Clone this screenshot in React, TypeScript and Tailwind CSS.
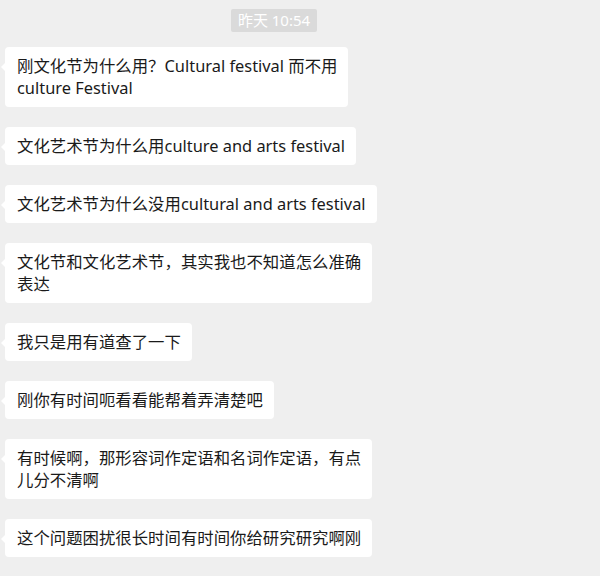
const messages: string[][] = [
  ["刚文化节为什么用？Cultural festival 而不用", "culture Festival"],
  ["文化艺术节为什么用culture and arts festival"],
  ["文化艺术节为什么没用cultural and arts festival"],
  ["文化节和文化艺术节，其实我也不知道怎么准确", "表达"],
  ["我只是用有道查了一下"],
  ["刚你有时间呃看看能帮着弄清楚吧"],
  ["有时候啊，那形容词作定语和名词作定语，有点", "儿分不清啊"],
  ["这个问题困扰很长时间有时间你给研究研究啊刚"],
];

function Bubble({ lines }: { lines: string[] }) {
  return (
    <div className="relative self-start whitespace-nowrap rounded-[4px] bg-white pl-3 pr-[11px] py-2 text-[16.4px] leading-[22px] text-[#1a1a1a]">
      {/* small tail on the left */}
      <span className="absolute -left-[4px] top-[16px] h-0 w-0 border-y-[4px] border-r-[4px] border-y-transparent border-r-white" />
      {lines.map((l) => (
        <div key={l}>{l}</div>
      ))}
    </div>
  );
}

export default function App() {
  return (
    <main
      className="flex h-[576px] w-[600px] flex-col overflow-hidden bg-[#efefef] pl-[5px] pt-[9px]"
      style={{ fontFamily: '"Noto Sans", "Noto Sans CJK SC", sans-serif' }}
    >
      {/* time stamp */}
      <div className="mb-[15px] flex justify-center pr-[5px]">
        <span className="ml-[-52px] flex h-[23px] items-center rounded-[2px] bg-[#dadada] px-[7px] text-[15px] text-white">
          昨天 10:54
        </span>
      </div>

      <div className="flex flex-col gap-5">
        {messages.map((m) => (
          <Bubble key={m[0]} lines={m} />
        ))}
      </div>
    </main>
  );
}
